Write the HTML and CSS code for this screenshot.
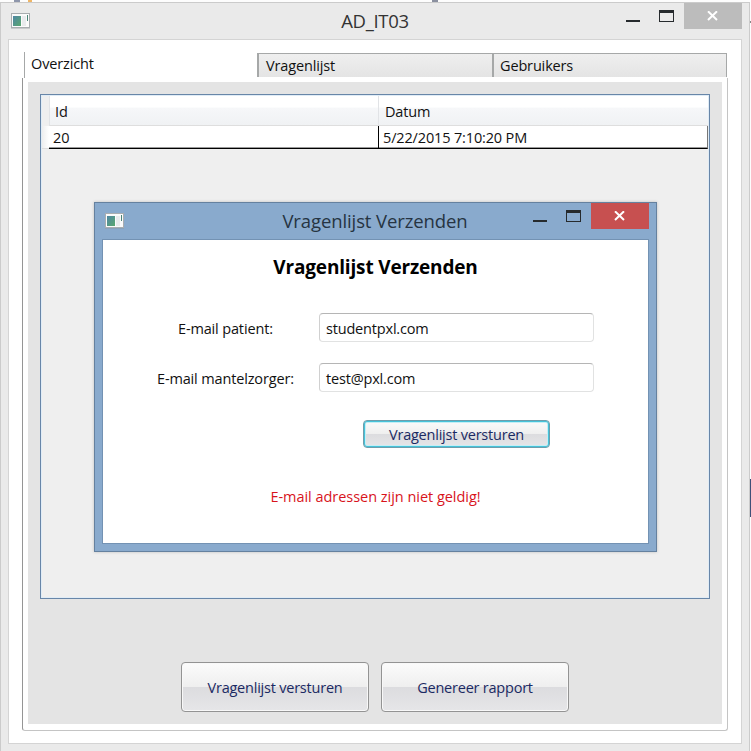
FILE: index.html
```
<!DOCTYPE html>
<html lang="nl">
<head>
<meta charset="utf-8">
<title>AD_IT03</title>
<link rel="stylesheet" href="styles.css">
</head>
<body>
<div class="backdrop"><i class="speck blue"></i><i class="speck gold"></i><i class="speck mid"></i><i class="edge dot"></i><i class="edge bar"></i></div>
<main class="window">
  <header class="titlebar">
    <svg class="app-icon" width="19" height="16" viewBox="0 0 19 16"><use href="#app"/></svg>
    <h1 class="window-title"><span>AD_IT03</span></h1>
    <div class="controls">
      <svg width="50" height="26" viewBox="0 0 50 26"><use href="#minmax"/></svg>
      <button class="close muted" aria-label="Sluiten"><svg width="12" height="10" viewBox="0 0 12 10"><use href="#x"/></svg></button>
    </div>
  </header>
  <section class="client">
    <nav class="tabs">
      <div class="tab active"><span>Overzicht</span></div>
      <div class="tab"><span>Vragenlijst</span></div>
      <div class="tab"><span>Gebruikers</span></div>
    </nav>
    <div class="panel">
      <div class="page">
        <div class="datagrid">
          <div class="row head"><div class="rowhead"></div><div class="cell"><span>Id</span></div><div class="cell"><span>Datum</span></div></div>
          <div class="row data"><div class="rowhead"></div><div class="cell"><span>20</span></div><div class="cell"><span class="date">5/22/2015 7:10:20 PM</span></div></div>
        </div>
        <div class="actions">
          <button class="button"><span class="w-send">Vragenlijst versturen</span></button>
          <button class="button"><span class="w-report">Genereer rapport</span></button>
        </div>
      </div>
    </div>
  </section>
</main>

<section class="dialog" role="dialog">
  <header class="dialog-bar">
    <svg class="app-icon" width="19" height="16" viewBox="0 0 19 16"><use href="#app"/></svg>
    <h2 class="dialog-title"><span>Vragenlijst Verzenden</span></h2>
    <div class="controls">
      <svg width="50" height="26" viewBox="0 0 50 26"><use href="#minmax"/></svg>
      <button class="close red" aria-label="Sluiten"><svg width="12" height="10" viewBox="0 0 12 10"><use href="#x"/></svg></button>
    </div>
  </header>
  <div class="dialog-body">
    <h3 class="heading"><span>Vragenlijst Verzenden</span></h3>
    <div class="field"><label class="l-patient">E-mail patient:</label><div class="input"><span class="v-patient">studentpxl.com</span></div></div>
    <div class="field"><label class="l-carer">E-mail mantelzorger:</label><div class="input"><span class="v-carer">test@pxl.com</span></div></div>
    <button class="button focused"><span class="w-send">Vragenlijst versturen</span></button>
    <p class="error"><span>E-mail adressen zijn niet geldig!</span></p>
  </div>
</section>

<svg class="defs" width="0" height="0">
  <defs>
    <linearGradient id="teal" x1="0" y1="0" x2="1" y2="1"><stop offset="0" stop-color="#4f86a4"/><stop offset="1" stop-color="#5aa86f"/></linearGradient>
    <symbol id="app" viewBox="0 0 19 16">
      <rect x=".5" y=".5" width="18" height="14" fill="#fbfbfb" stroke="#a9adb0"/>
      <rect x="0" y="15" width="19" height="1" fill="#8d9194" opacity=".35"/>
      <rect x="2" y="3" width="8" height="10" fill="url(#teal)"/>
      <rect x="11" y="3" width="4" height="10" fill="#e9ebed"/>
      <rect x="16" y="2" width="1" height="6" fill="#4c8578"/>
    </symbol>
    <symbol id="minmax" viewBox="0 0 50 26">
      <rect x="0" y="17" width="14" height="2" fill="#262a2d"/>
      <path fill="#262a2d" fill-rule="evenodd" d="M33 7h15v12H33zM34 10v8h13v-8z"/>
    </symbol>
    <symbol id="x" viewBox="0 0 12 10">
      <path fill="none" stroke="#fff" stroke-width="2" d="M1 .3L10 9M10 .3L1 9"/>
    </symbol>
  </defs>
</svg>
</body>
</html>
```
FILE: styles.css
```
* { box-sizing: border-box; }
body {
  margin: 0; width: 751px; height: 751px; overflow: hidden; position: relative;
  background: #fdfdfd; color: #111;
  font: 14.5px/20px "Open Sans", "Noto Sans", sans-serif;
  letter-spacing: -0.15px; white-space: nowrap;
  padding-top: 2px;
}
h1, h2, h3, p { margin: 0; font-weight: 400; }
button { font: inherit; letter-spacing: inherit; padding: 0; border: 0; }
.defs { position: absolute; }
.speck { position: absolute; top: 0; height: 2px; width: 6px; }
.speck.blue { left: 14px; background: #8f97ac; }
.speck.gold { left: 28px; width: 4px; background: #efb667; }
.speck.mid { left: 432px; background: #8b90a0; }
.edge { position: absolute; left: 750px; width: 1px; }
.edge.dot { top: 21px; height: 2px; background: #888; }
.edge.bar { top: 479px; height: 38px; background: #3f5078; }

.window {
  width: 750px; height: 749px; background: #eaeaea;
  border: 1px solid #cbcbcb; border-bottom: 0;
  display: flex; flex-direction: column; padding: 0 7px 7px;
}
.titlebar { height: 36px; display: flex; align-items: flex-start; flex: none; }
.titlebar .app-icon { margin: 10px 0 0 3px; }
.window-title { flex: 1; text-align: center; font-size: 18.5px; line-height: 36px; letter-spacing: -0.3px; color: #333; padding-left: 94px; }
.controls { display: flex; }
.close { width: 58px; height: 26px; display: flex; align-items: center; justify-content: center; }
.controls > svg { margin-right: 8px; }
.muted { background: #bcbcbc; }
.red { background: #c75050; }

.client {
  width: 734px; height: 705px; border: 1px solid #d4d4d4; background: #fff;
  padding: 12px 13px; flex: none;
}
.tabs { display: flex; align-items: flex-start; height: 26px; padding-left: 2px; }
.tab { height: 24px; width: 235px; margin-top: 1px; border: 1px solid #a6a8a8; border-right: 0; border-bottom: 0; border-left-width: 2px;
  background: linear-gradient(#efefef, #e4e4e4); padding: 2px 0 0 7px; }
.tab.active { width: 233px; height: 26px; margin-top: 0; border-width: 0 0 0 1px; background: #fff; padding: 2px 0 0 6px; }
.tab:last-child { width: 235px; border-right: 1px solid #a6a8a8; padding-left: 6px; }
.panel { width: 706px; height: 653px; border: 1px solid #c4c4c4; border-left-color: #959595; border-top: 0; border-radius: 0 0 3px 3px; padding: 4px 5px; }
.page { height: 642px; background: #e4e4e4; padding: 12px 12px 0; }
.datagrid { width: 670px; height: 505px; border: 1px solid #6886a8; background: #efefef; padding: 1px; box-shadow: inset 0 0 0 1px #e0ecf6; }
.row { display: flex; }
.rowhead { width: 7px; background: #efefef; }
.row.head { height: 30px; }
.head .cell { width: 329px; border-left: 1px solid #e1e3e6; border-bottom: 1px solid #dedede; background: linear-gradient(#fff 38%, #f6f7f9 42%, #f0f2f4); padding: 6px 0 0 5px; }
.head .cell:last-child { flex: 1; padding-left: 6px; }
.row.data { height: 23px; }
.data .rowhead { background: linear-gradient(90deg, #eee, #fff); border-bottom: 1px solid #ddd; }
.data .cell { width: 329px; background: #fff; border-bottom: 1px solid #000; box-shadow: inset 0 -1px #999; padding: 2px 0 0 4px; }
.data .cell:last-child { flex: 1; border-left: 1px solid #000; border-right: 1px solid #777; padding-left: 4px; }
.actions { display: flex; justify-content: center; gap: 12px; padding: 63px 0 0; }
.button {
  width: 188px; height: 50px; color: #1b2a63; padding-top: 2px;
  border: 1px solid #939393; border-radius: 4px; box-shadow: inset 0 0 0 1px #f8f8f8;
  background: linear-gradient(#fbfbfb, #efefef 49%, #dcdcdf 51%, #e6e6e8);
}
.w-send, .w-report { letter-spacing: -0.22px; }

.dialog {
  position: absolute; left: 94px; top: 202px; width: 563px; height: 350px;
  background: #89aacd; border: 1px solid #65819f; padding: 0 7px;
  box-shadow: 0 0 3px rgba(0,0,0,.2);
}
.dialog-bar { display: flex; align-items: flex-start; height: 36px; }
.dialog-bar .app-icon { margin: 10px 0 0 3px; }
.dialog-title { flex: 1; text-align: center; font-size: 18.5px; line-height: 36px; letter-spacing: -0.1px; color: #263442; padding-left: 93px; }
.dialog-body {
  height: 305px; background: #fff; border: 1px solid #7392b3; width: 547px;
  display: flex; flex-direction: column;
}
.heading { font-size: 19px; line-height: 26px; font-weight: 700; letter-spacing: -0.17px; color: #000; text-align: center; padding-top: 14px; margin-bottom: 33px; }
.field { display: flex; align-items: center; height: 29px; margin-bottom: 21px; }
.field label { width: 216px; padding-left: 54px; padding-top: 2px; }
.field .l-patient { padding-left: 75px; }
.input { width: 275px; height: 29px; border: 1px solid #e1e2e2; border-top-color: #b5b5b5; border-left-color: #d0d0d0; border-radius: 4px; padding: 5px 0 0 6px; }
.input span { letter-spacing: -0.18px; }
.button.focused { width: 187px; margin: 7px 0 0 260px; height: 28px; border-color: #6f9dab; box-shadow: inset 0 0 0 1px #45c3da, inset 0 0 0 2px #c5eef5; }
.error { color: #d8141c; text-align: center; letter-spacing: -0.03px; padding-top: 39px; }
```
